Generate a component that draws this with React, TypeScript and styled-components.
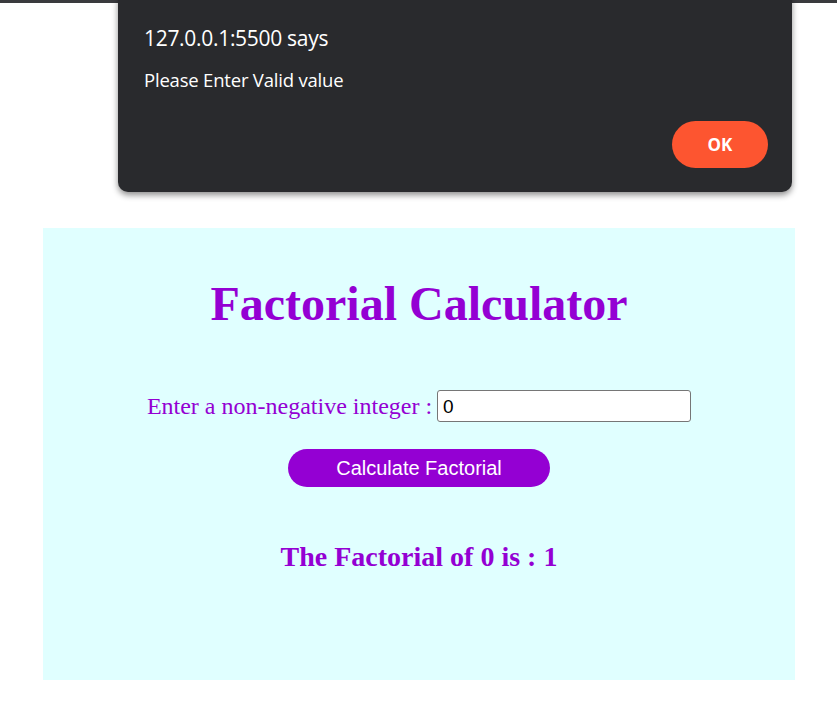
import React, { useState } from 'react';
import styled, { createGlobalStyle } from 'styled-components';

const GlobalStyle = createGlobalStyle`
  html, body {
    margin: 0;
    padding: 0;
    background: #ffffff;
  }
  body {
    font-family: 'Liberation Serif', 'Times New Roman', serif;
  }
`;

const Page = styled.div`
  position: relative;
  width: 100%;
  min-height: 715px;
  border-top: 3px solid #3a3b3e;
  box-sizing: border-box;
  padding-top: 225px;
`;

// browser alert box, laid over the page
const Dialog = styled.div`
  position: absolute;
  top: -12px;
  left: 118px;
  width: 674px;
  height: 201px;
  box-sizing: border-box;
  background: #292a2d;
  border-radius: 10px;
  box-shadow: 0 3px 6px rgba(0, 0, 0, 0.45);
  padding: 33px 24px 24px 26px;
  display: flex;
  flex-direction: column;
  font-family: 'Open Sans', 'Noto Sans', sans-serif;
  color: #ffffff;
`;

const DialogTitle = styled.div`
  font-size: 21px;
  line-height: 28px;
  letter-spacing: -0.3px;
`;

const DialogMessage = styled.div`
  margin-top: 16px;
  font-size: 18.5px;
  line-height: 24px;
  letter-spacing: -0.2px;
`;

const DialogActions = styled.div`
  margin-top: auto;
  display: flex;
  justify-content: flex-end;
`;

const OkButton = styled.button`
  width: 96px;
  height: 47px;
  border: none;
  border-radius: 24px;
  background: #fd5530;
  color: #ffffff;
  font-family: 'Open Sans', 'Noto Sans', sans-serif;
  font-size: 17px;
  font-weight: 700;
  cursor: pointer;
`;

const Panel = styled.div`
  width: 752px;
  margin: 0 0 0 43px;
  box-sizing: border-box;
  background: #e0ffff;
  padding: 48px 0 106px;
  display: flex;
  flex-direction: column;
  align-items: center;
  color: #9400d3;
`;

const Heading = styled.h1`
  margin: 0;
  font-size: 48px;
  font-weight: 700;
  line-height: 55px;
`;

const InputRow = styled.div`
  margin-top: 59px;
  display: flex;
  align-items: center;
  gap: 5px;
`;

const Label = styled.label`
  font-size: 24px;
  line-height: 27px;
  padding-top: 1px;
`;

const NumberInput = styled.input`
  width: 254px;
  height: 32px;
  box-sizing: border-box;
  border: 1px solid #767676;
  border-radius: 3px;
  padding: 1px 5px 0;
  font-family: 'Liberation Sans', Arial, sans-serif;
  font-size: 19px;
  color: #000000;
  background: #ffffff;
  outline: none;
`;

const CalcButton = styled.button`
  margin-top: 27px;
  width: 262px;
  height: 38px;
  border: none;
  border-radius: 19px;
  background: #9400d3;
  color: #ffffff;
  font-family: 'Liberation Sans', Arial, sans-serif;
  font-size: 20px;
  cursor: pointer;
`;

const Result = styled.h2`
  margin: 53px 0 0;
  font-size: 28px;
  font-weight: 700;
  line-height: 34px;
`;

export default function App() {
  const [value, setValue] = useState('0');
  return (
    <>
      <GlobalStyle />
      <Page>
        <Panel>
          <Heading>Factorial Calculator</Heading>
          <InputRow>
            <Label htmlFor="num">Enter a non-negative integer :</Label>
            <NumberInput id="num" type="text" value={value} onChange={(e) => setValue(e.target.value)} />
          </InputRow>
          <CalcButton type="button">Calculate Factorial</CalcButton>
          <Result>The Factorial of 0 is : 1</Result>
        </Panel>
        <Dialog role="alertdialog">
          <DialogTitle>127.0.0.1:5500 says</DialogTitle>
          <DialogMessage>Please Enter Valid value</DialogMessage>
          <DialogActions>
            <OkButton type="button">OK</OkButton>
          </DialogActions>
        </Dialog>
      </Page>
    </>
  );
}
